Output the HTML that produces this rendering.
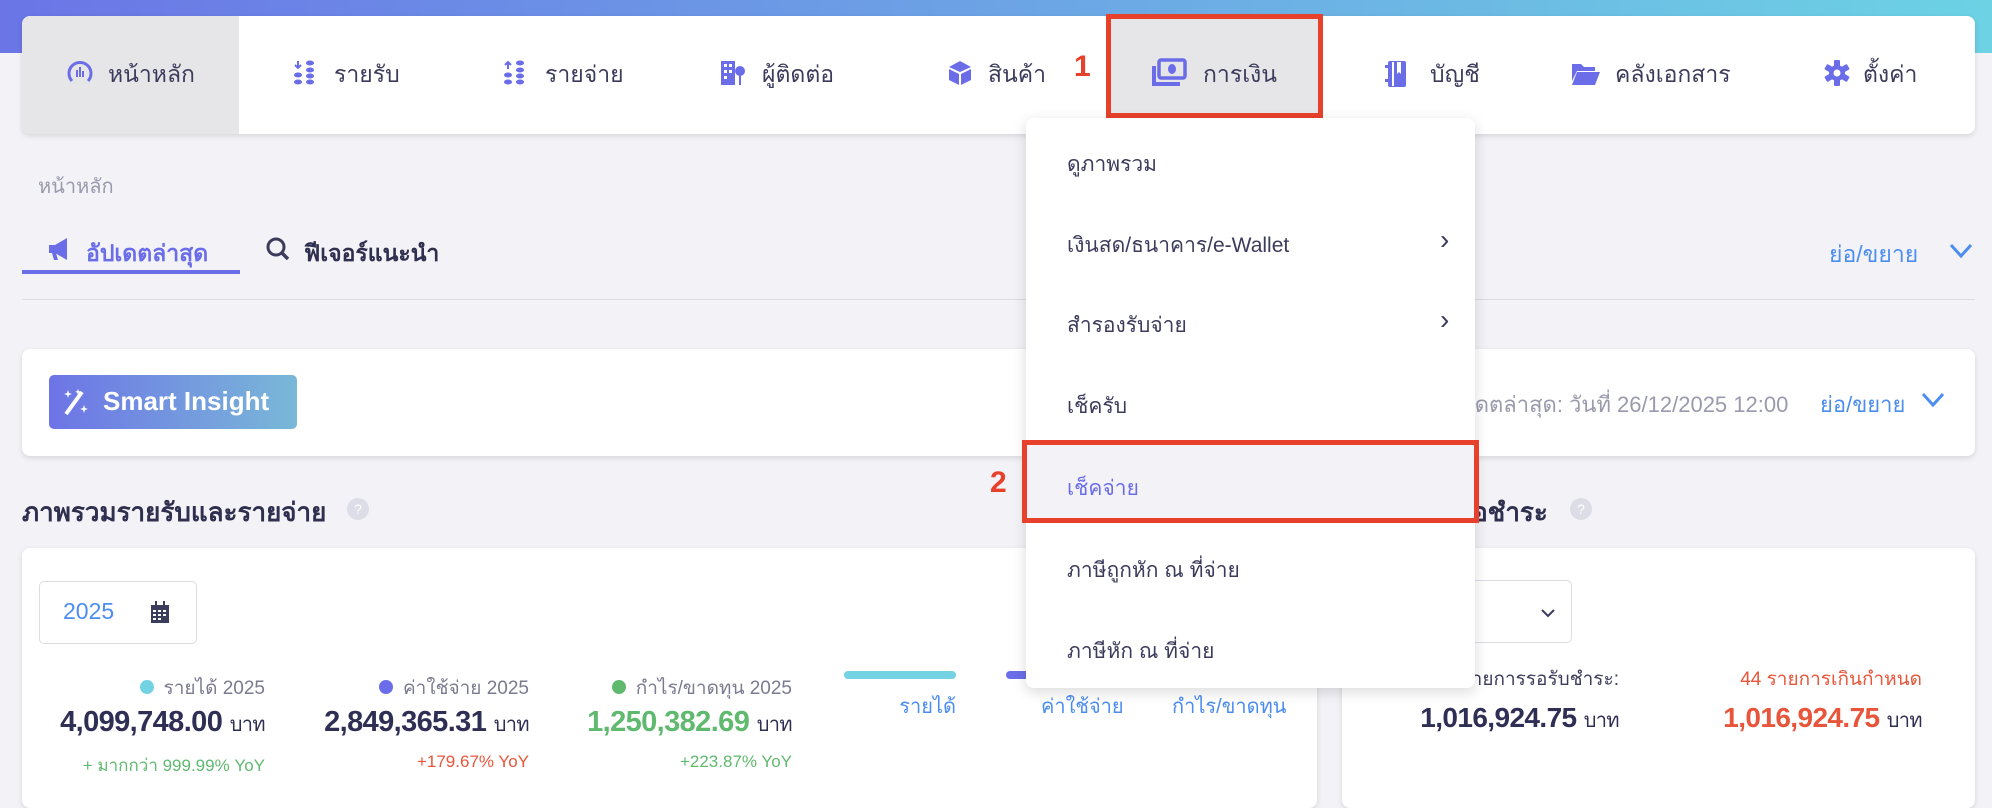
<!DOCTYPE html>
<html><head><meta charset="utf-8"><style>
*{margin:0;padding:0;box-sizing:border-box}
body{width:1992px;height:780px;overflow:hidden;background:#f3f3f7;font-family:"Liberation Sans","Noto Sans CJK SC",sans-serif;position:relative;color:#3b3b5c}
.a{position:absolute;white-space:nowrap}
.top{left:0;top:0;width:1992px;height:53px;background:linear-gradient(90deg,#6b75e6,#6cd2e4)}
.card{position:absolute;background:#fff;border-radius:8px;box-shadow:0 2px 6px rgba(0,0,0,.12)}
.nav{font-size:23px;color:#3b3b5c;top:57px}
.ic{position:absolute;top:60px}
.dd{font-size:21px;color:#3b3b5c}
.chev{font-size:28px;color:#3b3b5c}
.muted{color:#9a9aae}
.blue{color:#4c8df0}
.val{letter-spacing:-0.6px}
</style></head><body>
<div class="a top"></div>
<div class="card" style="left:22px;top:16px;width:1953px;height:118px"></div>
<div class="a" style="left:22px;top:16px;width:217px;height:118px;background:#e6e6e8;border-radius:8px 0 0 8px"></div>
<svg class="ic" style="left:67px" width="26" height="26" viewBox="0 0 26 26"><path d="M5 21A11 11 0 1 1 21 21" fill="none" stroke="#6b6de8" stroke-width="3"/><rect x="9" y="10" width="2" height="7" fill="#6b6de8"/><rect x="12" y="7" width="2" height="10" fill="#6b6de8"/><rect x="15" y="11" width="2" height="6" fill="#6b6de8"/></svg>
<div class="a nav" style="left:108px">หน้าหลัก</div>
<svg class="ic" style="left:293px" width="24" height="26" viewBox="0 0 24 26"><path d="M5 1v7M2 5l3 3 3-3" stroke="#6b6de8" stroke-width="2" fill="none"/><ellipse cx="5" cy="15" rx="4" ry="2.5" fill="#6b6de8"/><ellipse cx="5" cy="22" rx="4" ry="2.5" fill="#6b6de8"/><ellipse cx="17" cy="3" rx="4" ry="2.5" fill="#6b6de8"/><ellipse cx="17" cy="10" rx="4" ry="2.5" fill="#6b6de8"/><ellipse cx="17" cy="16" rx="4" ry="2.5" fill="#6b6de8"/><ellipse cx="17" cy="22" rx="4" ry="2.5" fill="#6b6de8"/></svg>
<div class="a nav" style="left:334px">รายรับ</div>
<svg class="ic" style="left:503px" width="24" height="26" viewBox="0 0 24 26"><path d="M5 9V2M2 5l3-3 3 3" stroke="#6b6de8" stroke-width="2" fill="none"/><ellipse cx="5" cy="15" rx="4" ry="2.5" fill="#6b6de8"/><ellipse cx="5" cy="22" rx="4" ry="2.5" fill="#6b6de8"/><ellipse cx="17" cy="3" rx="4" ry="2.5" fill="#6b6de8"/><ellipse cx="17" cy="10" rx="4" ry="2.5" fill="#6b6de8"/><ellipse cx="17" cy="16" rx="4" ry="2.5" fill="#6b6de8"/><ellipse cx="17" cy="22" rx="4" ry="2.5" fill="#6b6de8"/></svg>
<div class="a nav" style="left:545px">รายจ่าย</div>
<svg class="ic" style="left:720px" width="26" height="26" viewBox="0 0 26 26"><rect x="1" y="1" width="14" height="24" fill="#6b6de8"/><circle cx="20" cy="11" r="5" fill="#6b6de8"/><rect x="19" y="14" width="2" height="11" fill="#6b6de8"/><g fill="#fff"><rect x="4" y="4" width="3" height="3"/><rect x="9" y="4" width="3" height="3"/><rect x="4" y="10" width="3" height="3"/><rect x="9" y="10" width="3" height="3"/><rect x="4" y="16" width="3" height="3"/></g></svg>
<div class="a nav" style="left:762px">ผู้ติดต่อ</div>
<svg class="ic" style="left:948px" width="24" height="26" viewBox="0 0 24 26"><path d="M12 1L23 7 12 12 1 7z" fill="#6b6de8"/><path d="M1 9l10 5v11L1 20z" fill="#6b6de8"/><path d="M23 9l-10 5v11l10-5z" fill="#6b6de8"/></svg>
<div class="a nav" style="left:988px">สินค้า</div>
<div class="a" style="left:1074px;top:50px;font-size:30px;font-weight:bold;color:#e8412b">1</div>
<div class="a" style="left:1106px;top:14px;width:217px;height:104px;background:#e6e6e8;border:5px solid #e8412b"></div>
<svg class="ic" style="left:1151px;top:58px" width="36" height="30" viewBox="0 0 36 30"><path d="M3 8v18h26" fill="none" stroke="#6b6de8" stroke-width="4"/><rect x="8" y="2" width="26" height="18" rx="2" fill="none" stroke="#6b6de8" stroke-width="3.5"/><ellipse cx="21" cy="11" rx="4" ry="5" fill="#6b6de8"/></svg>
<div class="a nav" style="left:1203px">การเงิน</div>
<svg class="ic" style="left:1385px" width="22" height="28" viewBox="0 0 22 28"><rect x="3" y="1" width="18" height="26" rx="2" fill="#6b6de8"/><rect x="0" y="5" width="4" height="3" fill="#6b6de8"/><rect x="0" y="19" width="4" height="3" fill="#6b6de8"/><path d="M12 2h4v12l-2-2-2 2z" fill="#fff"/><rect x="7" y="2" width="2" height="24" fill="#fff"/></svg>
<div class="a nav" style="left:1430px">บัญชี</div>
<svg class="ic" style="left:1571px;top:61px" width="30" height="24" viewBox="0 0 30 24"><path d="M1 3h9l3 3h11v4H6L1 20z" fill="#6b6de8"/><path d="M6 11h23l-5 13H1z" fill="#6b6de8"/></svg>
<div class="a nav" style="left:1615px">คลังเอกสาร</div>
<svg class="ic" style="left:1824px" width="26" height="26" viewBox="0 0 26 26"><g fill="#6b6de8"><circle cx="13" cy="13" r="8"/><rect x="10" y="0" width="6" height="26" rx="1"/><rect x="10" y="0" width="6" height="26" rx="1" transform="rotate(60 13 13)"/><rect x="10" y="0" width="6" height="26" rx="1" transform="rotate(120 13 13)"/></g><circle cx="13" cy="13" r="3.5" fill="#fff"/></svg>
<div class="a nav" style="left:1863px">ตั้งค่า</div>

<div class="a muted" style="left:38px;top:170px;font-size:20px">หน้าหลัก</div>
<svg class="a" style="left:47px;top:237px" width="24" height="24" viewBox="0 0 24 24"><path d="M2 8h6l12-7v22L8 16H2z" fill="#6b6de8"/><path d="M5 16l2 7h4l-2-7z" fill="#6b6de8"/></svg>
<div class="a" style="left:86px;top:236px;font-size:23px;font-weight:bold;color:#6b6de8">อัปเดตล่าสุด</div>
<div class="a" style="left:22px;top:270px;width:218px;height:4px;background:#6b6de8"></div>
<svg class="a" style="left:265px;top:236px" width="26" height="26" viewBox="0 0 26 26"><circle cx="11" cy="11" r="8" fill="none" stroke="#3b3b5c" stroke-width="3"/><path d="M17 17l6 6" stroke="#3b3b5c" stroke-width="3.5"/></svg>
<div class="a" style="left:304px;top:236px;font-size:23px;font-weight:bold;color:#2f2f4f">ฟีเจอร์แนะนำ</div>
<div class="a blue" style="left:1829px;top:237px;font-size:23px">ย่อ/ขยาย</div>
<svg class="a" style="left:1949px;top:243px" width="24" height="16" viewBox="0 0 24 16"><path d="M2 2l10 11L22 2" fill="none" stroke="#4c8df0" stroke-width="3"/></svg>
<div class="a" style="left:22px;top:299px;width:1953px;height:1px;background:#dcdce2"></div>

<div class="card" style="left:22px;top:349px;width:1953px;height:107px"></div>
<div class="a" style="left:49px;top:375px;width:248px;height:54px;border-radius:5px;background:linear-gradient(90deg,#6d74e6,#79b8d8)"></div>
<svg class="a" style="left:62px;top:387px" width="28" height="30" viewBox="0 0 28 30"><path d="M4 27L20 5" stroke="#fff" stroke-width="4"/><path d="M6 3l1 3 3 1-3 1-1 3-1-3-3-1 3-1z M16 2l.8 2 2 .8-2 .8-.8 2-.8-2-2-.8 2-.8z M22 18l1 3 3 1-3 1-1 3-1-3-3-1 3-1z" fill="#fff"/></svg>
<div class="a" style="left:103px;top:386px;font-size:26px;font-weight:bold;color:#fff">Smart Insight</div>
<div class="a muted" style="left:1440px;top:387px;font-size:22px">อัปเดตล่าสุด: วันที่ 26/12/2025 12:00</div>
<div class="a blue" style="left:1820px;top:387px;font-size:22px">ย่อ/ขยาย</div>
<svg class="a" style="left:1921px;top:392px" width="24" height="16" viewBox="0 0 24 16"><path d="M2 2l10 11L22 2" fill="none" stroke="#4c8df0" stroke-width="3"/></svg>

<div class="a" style="left:22px;top:492px;font-size:26px;font-weight:bold;color:#2f2f4f">ภาพรวมรายรับและรายจ่าย</div>
<div class="a" style="left:347px;top:498px;width:22px;height:22px;border-radius:50%;background:#dcdde6;color:#fff;font-size:14px;text-align:center;line-height:22px">?</div>
<div class="a" style="left:1370px;top:492px;font-size:26px;font-weight:bold;color:#2f2f4f">รายการรอชำระ</div>
<div class="a" style="left:1570px;top:498px;width:22px;height:22px;border-radius:50%;background:#dcdde6;color:#fff;font-size:14px;text-align:center;line-height:22px">?</div>

<div class="card" style="left:22px;top:548px;width:1295px;height:260px"></div>
<div class="card" style="left:1342px;top:548px;width:633px;height:260px"></div>
<div class="a" style="left:39px;top:581px;width:158px;height:63px;border:1px solid #dcdce4;border-radius:5px"></div>
<div class="a blue" style="left:63px;top:598px;font-size:23px">2025</div>
<svg class="a" style="left:150px;top:601px" width="20" height="22" viewBox="0 0 20 22"><rect x="1" y="4" width="18" height="18" fill="#3b3b5c"/><rect x="5" y="0" width="2" height="5" fill="#3b3b5c"/><rect x="13" y="0" width="2" height="5" fill="#3b3b5c"/><g fill="#fff"><rect x="3" y="9" width="3" height="2"/><rect x="8" y="9" width="3" height="2"/><rect x="13" y="9" width="3" height="2"/><rect x="3" y="13" width="3" height="2"/><rect x="8" y="13" width="3" height="2"/><rect x="13" y="13" width="3" height="2"/><rect x="3" y="17" width="3" height="2"/><rect x="8" y="17" width="3" height="2"/></g></svg>

<div class="a" style="right:1727px;top:673px;font-size:19px;color:#7b7b90"><span style="display:inline-block;width:14px;height:14px;border-radius:50%;background:#73d3e2;margin-right:10px"></span>รายได้ 2025</div>
<div class="a val" style="right:1727px;top:706px;font-size:29px;font-weight:bold;color:#2f2f55">4,099,748.00 <span style="font-size:20px;font-weight:normal">บาท</span></div>
<div class="a" style="right:1727px;top:752px;font-size:17px;color:#5fb96f">+ มากกว่า 999.99% YoY</div>
<div class="a" style="right:1463px;top:673px;font-size:19px;color:#7b7b90"><span style="display:inline-block;width:14px;height:14px;border-radius:50%;background:#6b6de8;margin-right:10px"></span>ค่าใช้จ่าย 2025</div>
<div class="a val" style="right:1463px;top:706px;font-size:29px;font-weight:bold;color:#2f2f55">2,849,365.31 <span style="font-size:20px;font-weight:normal">บาท</span></div>
<div class="a" style="right:1463px;top:752px;font-size:17px;color:#e8553a">+179.67% YoY</div>
<div class="a" style="right:1200px;top:673px;font-size:19px;color:#7b7b90"><span style="display:inline-block;width:14px;height:14px;border-radius:50%;background:#5fb96f;margin-right:10px"></span>กำไร/ขาดทุน 2025</div>
<div class="a val" style="right:1200px;top:706px;font-size:29px;font-weight:bold;color:#5fb96f">1,250,382.69 <span style="font-size:20px;font-weight:normal;color:#2f2f55">บาท</span></div>
<div class="a" style="right:1200px;top:752px;font-size:17px;color:#5fb96f">+223.87% YoY</div>
<div class="a" style="left:844px;top:671px;width:112px;height:8px;border-radius:4px;background:#73d3e2"></div>
<div class="a" style="left:1006px;top:671px;width:40px;height:8px;border-radius:4px;background:#6b6de8"></div>
<div class="a blue" style="right:1036px;top:690px;font-size:20px">รายได้</div>
<div class="a blue" style="left:1041px;top:690px;font-size:20px">ค่าใช้จ่าย</div>
<div class="a blue" style="left:1172px;top:690px;font-size:20px">กำไร/ขาดทุน</div>

<div class="a" style="left:1360px;top:580px;width:212px;height:63px;border:1px solid #dcdce4;border-radius:5px"></div>
<svg class="a" style="left:1540px;top:608px" width="16" height="10" viewBox="0 0 16 10"><path d="M2 2l6 6 6-6" fill="none" stroke="#3b3b5c" stroke-width="2"/></svg>
<div class="a" style="right:373px;top:664px;font-size:19px;color:#3b3b5c">จำนวน 44 รายการรอรับชำระ:</div>
<div class="a val" style="right:373px;top:702px;font-size:28px;font-weight:bold;color:#2f2f55">1,016,924.75 <span style="font-size:20px;font-weight:normal">บาท</span></div>
<div class="a" style="right:70px;top:664px;font-size:19px;color:#e8553a">44 รายการเกินกำหนด</div>
<div class="a val" style="right:70px;top:702px;font-size:28px;font-weight:bold;color:#e8553a">1,016,924.75 <span style="font-size:20px;font-weight:normal;color:#2f2f55">บาท</span></div>

<div class="card" style="left:1026px;top:118px;width:449px;height:570px;box-shadow:0 4px 14px rgba(0,0,0,.15)"></div>
<div class="a dd" style="left:1067px;top:148px">ดูภาพรวม</div>
<div class="a dd" style="left:1067px;top:229px">เงินสด/ธนาคาร/e-Wallet</div>
<div class="a chev" style="left:1440px;top:224px">›</div>
<div class="a dd" style="left:1067px;top:309px">สำรองรับจ่าย</div>
<div class="a chev" style="left:1440px;top:304px">›</div>
<div class="a dd" style="left:1067px;top:390px">เช็ครับ</div>
<div class="a" style="left:1022px;top:440px;width:457px;height:83px;background:#f3f3f7;border:5px solid #e8412b"></div>
<div class="a dd" style="left:1067px;top:472px;color:#6b6de8">เช็คจ่าย</div>
<div class="a" style="left:990px;top:466px;font-size:30px;font-weight:bold;color:#e8412b">2</div>
<div class="a dd" style="left:1067px;top:554px">ภาษีถูกหัก ณ ที่จ่าย</div>
<div class="a dd" style="left:1067px;top:635px">ภาษีหัก ณ ที่จ่าย</div>
</body></html>
